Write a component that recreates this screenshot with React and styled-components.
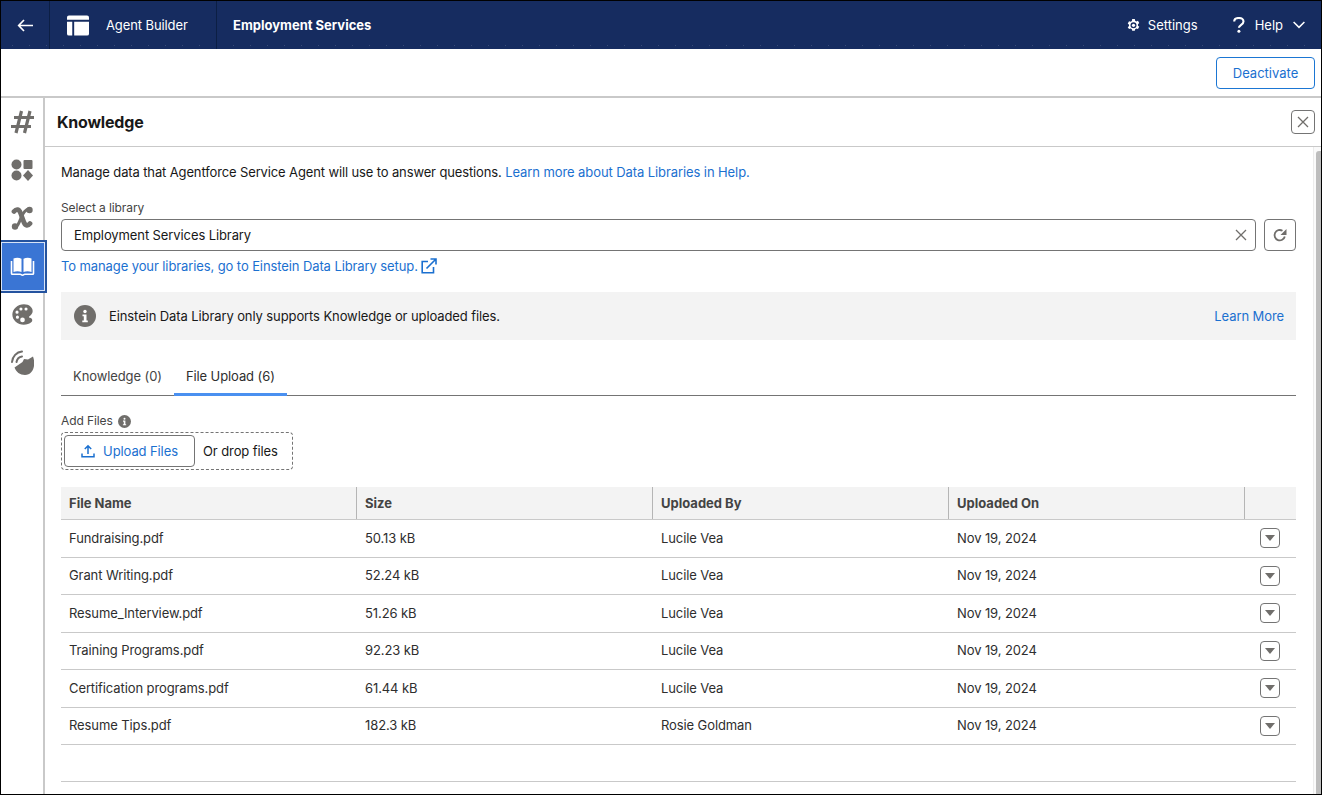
import React from 'react';
import styled, { createGlobalStyle } from 'styled-components';
import { IoColorPalette } from 'react-icons/io5';

const GlobalStyle = createGlobalStyle`
  html, body {
    margin: 0;
    padding: 0;
    height: 100%;
    overflow: hidden;
    background: #fff;
  }
  body, button {
    font-family: Inter, "Liberation Sans", sans-serif;
    font-size: 13px;
    color: #181818;
  }
  * { box-sizing: border-box; }
`;

const Page = styled.div`
  width: 1322px;
  height: 795px;
  display: flex;
  flex-direction: column;
  border: 1px solid #000;
  background: #fff;
  overflow: hidden;
`;

const Header = styled.header`
  height: 48px;
  flex: none;
  display: flex;
  align-items: stretch;
  color: #fff;
  background-color: #162c60;
  background-image: radial-gradient(circle, rgba(255, 255, 255, 0.14) 0.6px, transparent 0.8px);
  background-size: 17px 7px;
  background-position: 3px 100%;
  background-repeat: repeat-x;
`;
const HeaderCell = styled.div`
  display: flex;
  align-items: center;
  width: ${({ $w }) => $w}px;
  padding-left: ${({ $pad }) => $pad || 0}px;
  border-right: ${({ $line }) => ($line ? '1px solid #0c1f44' : '0')};
`;
const AppName = styled.span`
  margin-left: 17px;
  font-size: 13px;
  letter-spacing: -0.1px;
`;
const RecordName = styled.span`
  font-size: 13px;
  font-weight: 700;
`;
const HeaderRight = styled.div`
  margin-left: auto;
  display: flex;
  align-items: center;
  padding-right: 16px;
`;
const HeaderAction = styled.span`
  display: flex;
  align-items: center;
  gap: ${({ $gap }) => $gap}px;
  font-size: 13px;
  margin-left: ${({ $ml }) => $ml || 0}px;
`;

const Toolbar = styled.div`
  height: 49px;
  flex: none;
  display: flex;
  justify-content: flex-end;
  align-items: flex-start;
  padding: 8px 6px 0 0;
  border-bottom: 2px solid #c9c9c9;
`;
const OutlineButton = styled.button`
  width: 99px;
  height: 32px;
  background: #fff;
  border: 1px solid #1b76d3;
  border-radius: 4px;
  color: #1b70d0;
  font-size: 13px;
  padding: 0;
`;

const Body = styled.div`
  flex: 1;
  min-height: 0;
  display: flex;
`;
const Rail = styled.nav`
  width: 44px;
  flex: none;
  border-right: 2px solid #c9c9c9;
  display: flex;
  flex-direction: column;
`;
const RailItem = styled.div`
  height: 48px;
  display: flex;
  align-items: center;
  justify-content: center;
  color: #706e6b;
  position: relative;
  ${({ $active }) =>
    $active &&
    `
    width: 46px;
    height: 53px;
    margin: -2px 0 -3px;
    z-index: 1;
    padding-right: 2px;
    color: #fff;
    background: #3a75d4;
    border: 2px solid #24539f;
    border-left: 0;
    box-shadow: inset 0 0 0 1px #d8e4f7;
  `}
`;

const Panel = styled.main`
  flex: 1;
  min-width: 0;
  display: flex;
  flex-direction: column;
`;
const PanelHead = styled.div`
  height: 49px;
  flex: none;
  display: flex;
  align-items: center;
  justify-content: space-between;
  padding: 0 6px 0 12px;
  border-bottom: 1px solid #c9c9c9;
`;
const PanelTitle = styled.h2`
  margin: 0;
  font-size: 16px;
  font-weight: 700;
  letter-spacing: -0.2px;
`;
const IconButton = styled.button`
  width: ${({ $size }) => $size || 24}px;
  height: ${({ $size }) => $size || 24}px;
  flex: none;
  display: flex;
  align-items: center;
  justify-content: center;
  padding: 0;
  background: #fff;
  border: 1px solid #747474;
  border-radius: 4px;
  color: #706e6b;
`;

const ScrollArea = styled.div`
  flex: 1;
  min-height: 0;
  display: flex;
`;
const Content = styled.div`
  flex: 1;
  min-width: 0;
  padding: 16px 17px 0 16px;
  letter-spacing: -0.1px;
`;
const Scrollbar = styled.div`
  width: 8px;
  flex: none;
  background: #fafafa;
  border-left: 1px solid #ececec;
  padding-top: 4px;
  display: flex;
  justify-content: flex-end;
  &::after {
    content: '';
    width: 5px;
    background: #bdbdbd;
    border-radius: 3px 0 0 0;
  }
`;
const Intro = styled.p`
  margin: 0;
  line-height: 18px;
  letter-spacing: -0.13px;
`;
const Link = styled.a`
  color: #1b70d0;
  letter-spacing: -0.09px;
`;
const FieldLabel = styled.div`
  margin-top: 18px;
  font-size: 12px;
  line-height: 18px;
  color: #444;
`;
const FieldRow = styled.div`
  margin-top: 2px;
  display: flex;
  gap: 8px;
`;
const Select = styled.div`
  flex: 1;
  height: 32px;
  display: flex;
  align-items: center;
  justify-content: space-between;
  padding: 0 8px 0 12px;
  border: 1px solid #747474;
  border-radius: 4px;
`;
const SetupLink = styled.div`
  margin-top: 5px;
  line-height: 20px;
  display: flex;
  align-items: center;
  gap: 3px;
  color: #1b70d0;
`;
const Notice = styled.div`
  margin-top: 16px;
  height: 48px;
  background: #f3f3f3;
  display: flex;
  align-items: center;
  justify-content: space-between;
  padding: 0 12px 0 13px;
`;
const NoticeText = styled.div`
  display: flex;
  align-items: center;
  gap: 13px;
`;
const Tabs = styled.div`
  margin-top: 18px;
  height: 38px;
  display: flex;
  border-bottom: 1px solid #747474;
`;
const Tab = styled.div`
  padding: 0 12px;
  line-height: 36px;
  height: 38px;
  color: #444;
  ${({ $active }) => $active && 'color: #2e2e2e; border-bottom: 3px solid #4a90f0;'}
`;
const AddLabel = styled.div`
  margin-top: 16px;
  display: flex;
  align-items: center;
  gap: 5px;
  font-size: 12px;
  line-height: 18px;
  color: #444;
`;
const DropZone = styled.div`
  width: 232px;
  height: 38px;
  margin-top: 2px;
  padding: 2px;
  display: flex;
  align-items: center;
  gap: 8px;
  border: 1px dashed #747474;
  border-radius: 4px;
`;
const UploadButton = styled.button`
  width: 131px;
  height: 32px;
  display: flex;
  align-items: center;
  justify-content: center;
  gap: 8px;
  background: #fff;
  border: 1px solid #747474;
  border-radius: 4px;
  color: #1b70d0;
  font-size: 13px;
  letter-spacing: -0.1px;
  padding: 0;
`;
const Grid = styled.div`
  margin-top: 17px;
`;
const HeadRow = styled.div`
  height: 33px;
  display: grid;
  grid-template-columns: repeat(4, 296px) 1fr;
  background: #f3f3f3;
  border-bottom: 1px solid #c9c9c9;
`;
const HeadCell = styled.div`
  display: flex;
  align-items: center;
  padding: 0 0 1px 8px;
  height: 32px;
  font-weight: 700;
  letter-spacing: 0;
  color: #444;
  border-right: ${({ $last }) => ($last ? '0' : '1px solid #b5b5b5')};
`;
const Row = styled.div`
  height: 37.5px;
  display: grid;
  grid-template-columns: repeat(4, 296px) 1fr;
  border-bottom: 1px solid #c9c9c9;
`;
const Cell = styled.div`
  display: flex;
  align-items: center;
  padding-left: 8px;
  padding-bottom: ${({ $end }) => ($end ? '0' : '1px')};
  color: #2e2e2e;
  justify-content: ${({ $end }) => ($end ? 'flex-end' : 'flex-start')};
  padding-right: ${({ $end }) => ($end ? '16px' : '0')};
`;
const GridEnd = styled.div`
  margin-top: 36px;
  border-top: 1px solid #c9c9c9;
`;

const BackIcon = () => (
  <svg width="16" height="13" viewBox="0 0 16 13" fill="none" stroke="#fff" strokeWidth="1.7">
    <path d="M16 6.500H2M7 1L1.700 6.500 7 12" />
  </svg>
);
const AppIcon = () => (
  <svg width="22" height="21" viewBox="0 0 23 21" fill="#fff">
    <path d="M2 0h19a2 2 0 0 1 2 2v2.500H0V2a2 2 0 0 1 2-2z" />
    <path d="M0 6.500h5.500V21H2a2 2 0 0 1-2-2z" />
    <path d="M7.500 6.500H23V19a2 2 0 0 1-2 2H7.500z" />
  </svg>
);
const GearIcon = () => (
  <svg width="13" height="14" viewBox="0 0 14 14">
    <path
      fill="#fff"
      fillRule="evenodd"
      d="M5.600.600h2.800l.4 1.800 1.200.7 1.800-.6 1.400 2.400-1.400 1.300v1.500l1.400 1.300-1.400 2.400-1.800-.6-1.200.7-.4 1.800H5.600l-.4-1.800-1.200-.7-1.800.6L.8 9.400l1.400-1.300V6.600L.8 5.300l1.400-2.400 1.800.6 1.200-.7zM7 4.100a3.250 3.250 0 1 0 0 6.500 3.250 3.250 0 0 0 0-6.500z"
    />
    <circle cx="7" cy="7.350" r="1.700" fill="#fff" />
  </svg>
);
const HelpIcon = () => (
  <svg width="12" height="16" viewBox="0 0 12 16" fill="none" stroke="#fff" strokeWidth="2.100">
    <path d="M1.200 4.500C1.200 2.300 3.200 1 5.800 1c2.700 0 4.700 1.400 4.700 3.500 0 3.300-4.600 3.200-4.600 6.300" />
    <circle cx="5.900" cy="14.300" r="1.500" fill="#fff" stroke="none" />
  </svg>
);
const HashIcon = () => (
  <svg width="23" height="24" viewBox="0 0 23 24" fill="none" stroke="currentColor" strokeWidth="3.200">
    <path d="M10.500 1L5 23M19 1L13.500 23M3 7.500h20M0 16.500h20" />
  </svg>
);
const AppsIcon = () => (
  <svg width="22" height="22" viewBox="0 0 22 22" fill="currentColor">
    <circle cx="5.500" cy="5.500" r="5" />
    <rect x="12.500" y="1" width="9" height="9" rx="1" />
    <circle cx="5.500" cy="16.500" r="5" />
    <path d="M17 11l5 5.500-5 5.500-5-5.500z" />
  </svg>
);
const VariableIcon = () => (
  <svg width="22" height="26" viewBox="0 0 22 26" fill="none" stroke="currentColor" strokeLinecap="round">
    <path strokeWidth="4.800" d="M3 6.500C5.500 3.500 8 4 9.500 8L13 17.500c1.500 3.500 4 3.500 6 1" />
    <path strokeWidth="3" d="M19 4.500C15 3.500 12 8 10 13c-2 5-4 10-6.500 9.500" />
    <circle cx="18.500" cy="5" r="3.200" fill="currentColor" stroke="none" />
    <circle cx="4" cy="21.500" r="3.200" fill="currentColor" stroke="none" />
  </svg>
);
const BookIcon = () => (
  <svg width="25" height="20" viewBox="0 0 25 20" fill="currentColor">
    <path d="M3.500 1.500C6 .5 9 .5 11.500 1.700V15C9 14 6 14 3.500 15z" />
    <path d="M21.500 1.500C19 .5 16 .5 13.500 1.700V15c2.500-1 5.500-1 8 0z" />
    <path
      fill="none"
      stroke="currentColor"
      strokeWidth="1.600"
      d="M1.500 4v12.500c0 .5.300.8.800.8h8c.7 0 1 .9 2.200.9s1.500-.9 2.200-.9h8c.5 0 .8-.3.800-.8V4"
    />
  </svg>
);
const SignalIcon = () => (
  <svg width="24" height="26" viewBox="0 0 24 26" fill="none" stroke="currentColor">
    <path fill="currentColor" stroke="none" d="M4.500 18.500l8-5.500 1.500-3 4 .5 5-3c3 8 .5 18.500-8 18.500-5 0-9-3-10.500-7.500z" />
    <path strokeWidth="2" strokeLinecap="round" d="M2 13C2.500 7.500 6.500 3 12 2.500M6.500 13C7 10 9 8 12 7.500" />
  </svg>
);
const InfoIcon = ({ size }) => (
  <svg width={size} height={size} viewBox="0 0 22 22">
    <circle cx="11" cy="11" r="11" fill="#706e6b" />
    <circle cx="11" cy="6.500" r="1.700" fill="#fff" />
    <path fill="#fff" d="M8.500 9.500h4v6h1.300v1.800H8.300v-1.800h1.500v-4.200H8.500z" />
  </svg>
);
const CloseIcon = ({ size = 12 }) => (
  <svg width={size} height={size} viewBox="0 0 12 12" fill="none" stroke="#706e6b" strokeWidth="1.300">
    <path d="M1 1l10 10M11 1L1 11" />
  </svg>
);
const RefreshIcon = () => (
  <svg width="14" height="14" viewBox="0 0 14 14" fill="none" stroke="#706e6b" strokeWidth="1.800">
    <path d="M11.800 8.500A5.200 5.200 0 1 1 9.500 2.800" />
    <path fill="#706e6b" stroke="none" d="M13.500 1v6H7.500z" />
  </svg>
);
const ExternalIcon = () => (
  <svg width="16" height="16" viewBox="0 0 16 16" fill="none" stroke="#1b70d0" strokeWidth="1.600">
    <path d="M7 3.500H1.200v11.300h11.300V9" />
    <path d="M5.500 10.500L14.500 1.500M9.500 1h5.500v5.500" />
  </svg>
);
const UploadIcon = () => (
  <svg width="14" height="14" viewBox="0 0 14 14" fill="none" stroke="#1b70d0" strokeWidth="1.500">
    <path d="M7 10V2M3.800 5L7 1.800 10.200 5" />
    <path d="M1 9.500v3.300h12V9.500" />
  </svg>
);
const Caret = () => (
  <svg width="10" height="6" viewBox="0 0 10 6" fill="#706e6b">
    <path d="M0 0h10L5 6z" />
  </svg>
);
const Chevron = () => (
  <svg width="12" height="8" viewBox="0 0 12 8" fill="none" stroke="#fff" strokeWidth="1.500">
    <path d="M.6 1l5.400 5.400L11.400 1" />
  </svg>
);

const files = [
  ['Fundraising.pdf', '50.13 kB', 'Lucile Vea'],
  ['Grant Writing.pdf', '52.24 kB', 'Lucile Vea'],
  ['Resume_Interview.pdf', '51.26 kB', 'Lucile Vea'],
  ['Training Programs.pdf', '92.23 kB', 'Lucile Vea'],
  ['Certification programs.pdf', '61.44 kB', 'Lucile Vea'],
  ['Resume Tips.pdf', '182.3 kB', 'Rosie Goldman'],
];

export default function App() {
  return (
    <>
      <GlobalStyle />
      <Page>
        <Header>
          <HeaderCell $w={49} $pad={16} $line>
            <BackIcon />
          </HeaderCell>
          <HeaderCell $w={167} $pad={17} $line>
            <AppIcon />
            <AppName>Agent Builder</AppName>
          </HeaderCell>
          <HeaderCell $w={400} $pad={16}>
            <RecordName>Employment Services</RecordName>
          </HeaderCell>
          <HeaderRight>
            <HeaderAction $gap={8}>
              <GearIcon />
              Settings
            </HeaderAction>
            <HeaderAction $ml={35} $gap={10}>
              <HelpIcon />
              Help
              <Chevron />
            </HeaderAction>
          </HeaderRight>
        </Header>
        <Toolbar>
          <OutlineButton>Deactivate</OutlineButton>
        </Toolbar>
        <Body>
          <Rail>
            <RailItem><HashIcon /></RailItem>
            <RailItem><AppsIcon /></RailItem>
            <RailItem><VariableIcon /></RailItem>
            <RailItem $active><BookIcon /></RailItem>
            <RailItem><IoColorPalette size={25} /></RailItem>
            <RailItem><SignalIcon /></RailItem>
          </Rail>
          <Panel>
            <PanelHead>
              <PanelTitle>Knowledge</PanelTitle>
              <IconButton><CloseIcon /></IconButton>
            </PanelHead>
            <ScrollArea>
              <Content>
                <Intro>
                  Manage data that Agentforce Service Agent will use to answer questions.{' '}
                  <Link>Learn more about Data Libraries in Help.</Link>
                </Intro>
                <FieldLabel>Select a library</FieldLabel>
                <FieldRow>
                  <Select>
                    Employment Services Library
                    <CloseIcon />
                  </Select>
                  <IconButton $size={32}><RefreshIcon /></IconButton>
                </FieldRow>
                <SetupLink>
                  To manage your libraries, go to Einstein Data Library setup.
                  <ExternalIcon />
                </SetupLink>
                <Notice>
                  <NoticeText>
                    <InfoIcon size={22} />
                    Einstein Data Library only supports Knowledge or uploaded files.
                  </NoticeText>
                  <Link>Learn More</Link>
                </Notice>
                <Tabs>
                  <Tab>Knowledge (0)</Tab>
                  <Tab $active>File Upload (6)</Tab>
                </Tabs>
                <AddLabel>
                  Add Files <InfoIcon size={13} />
                </AddLabel>
                <DropZone>
                  <UploadButton>
                    <UploadIcon />
                    Upload Files
                  </UploadButton>
                  Or drop files
                </DropZone>
                <Grid>
                  <HeadRow>
                    <HeadCell>File Name</HeadCell>
                    <HeadCell>Size</HeadCell>
                    <HeadCell>Uploaded By</HeadCell>
                    <HeadCell>Uploaded On</HeadCell>
                    <HeadCell $last />
                  </HeadRow>
                  {files.map(([name, size, by]) => (
                    <Row key={name}>
                      <Cell>{name}</Cell>
                      <Cell>{size}</Cell>
                      <Cell>{by}</Cell>
                      <Cell>Nov 19, 2024</Cell>
                      <Cell $end>
                        <IconButton $size={20}><Caret /></IconButton>
                      </Cell>
                    </Row>
                  ))}
                </Grid>
                <GridEnd />
              </Content>
              <Scrollbar />
            </ScrollArea>
          </Panel>
        </Body>
      </Page>
    </>
  );
}
